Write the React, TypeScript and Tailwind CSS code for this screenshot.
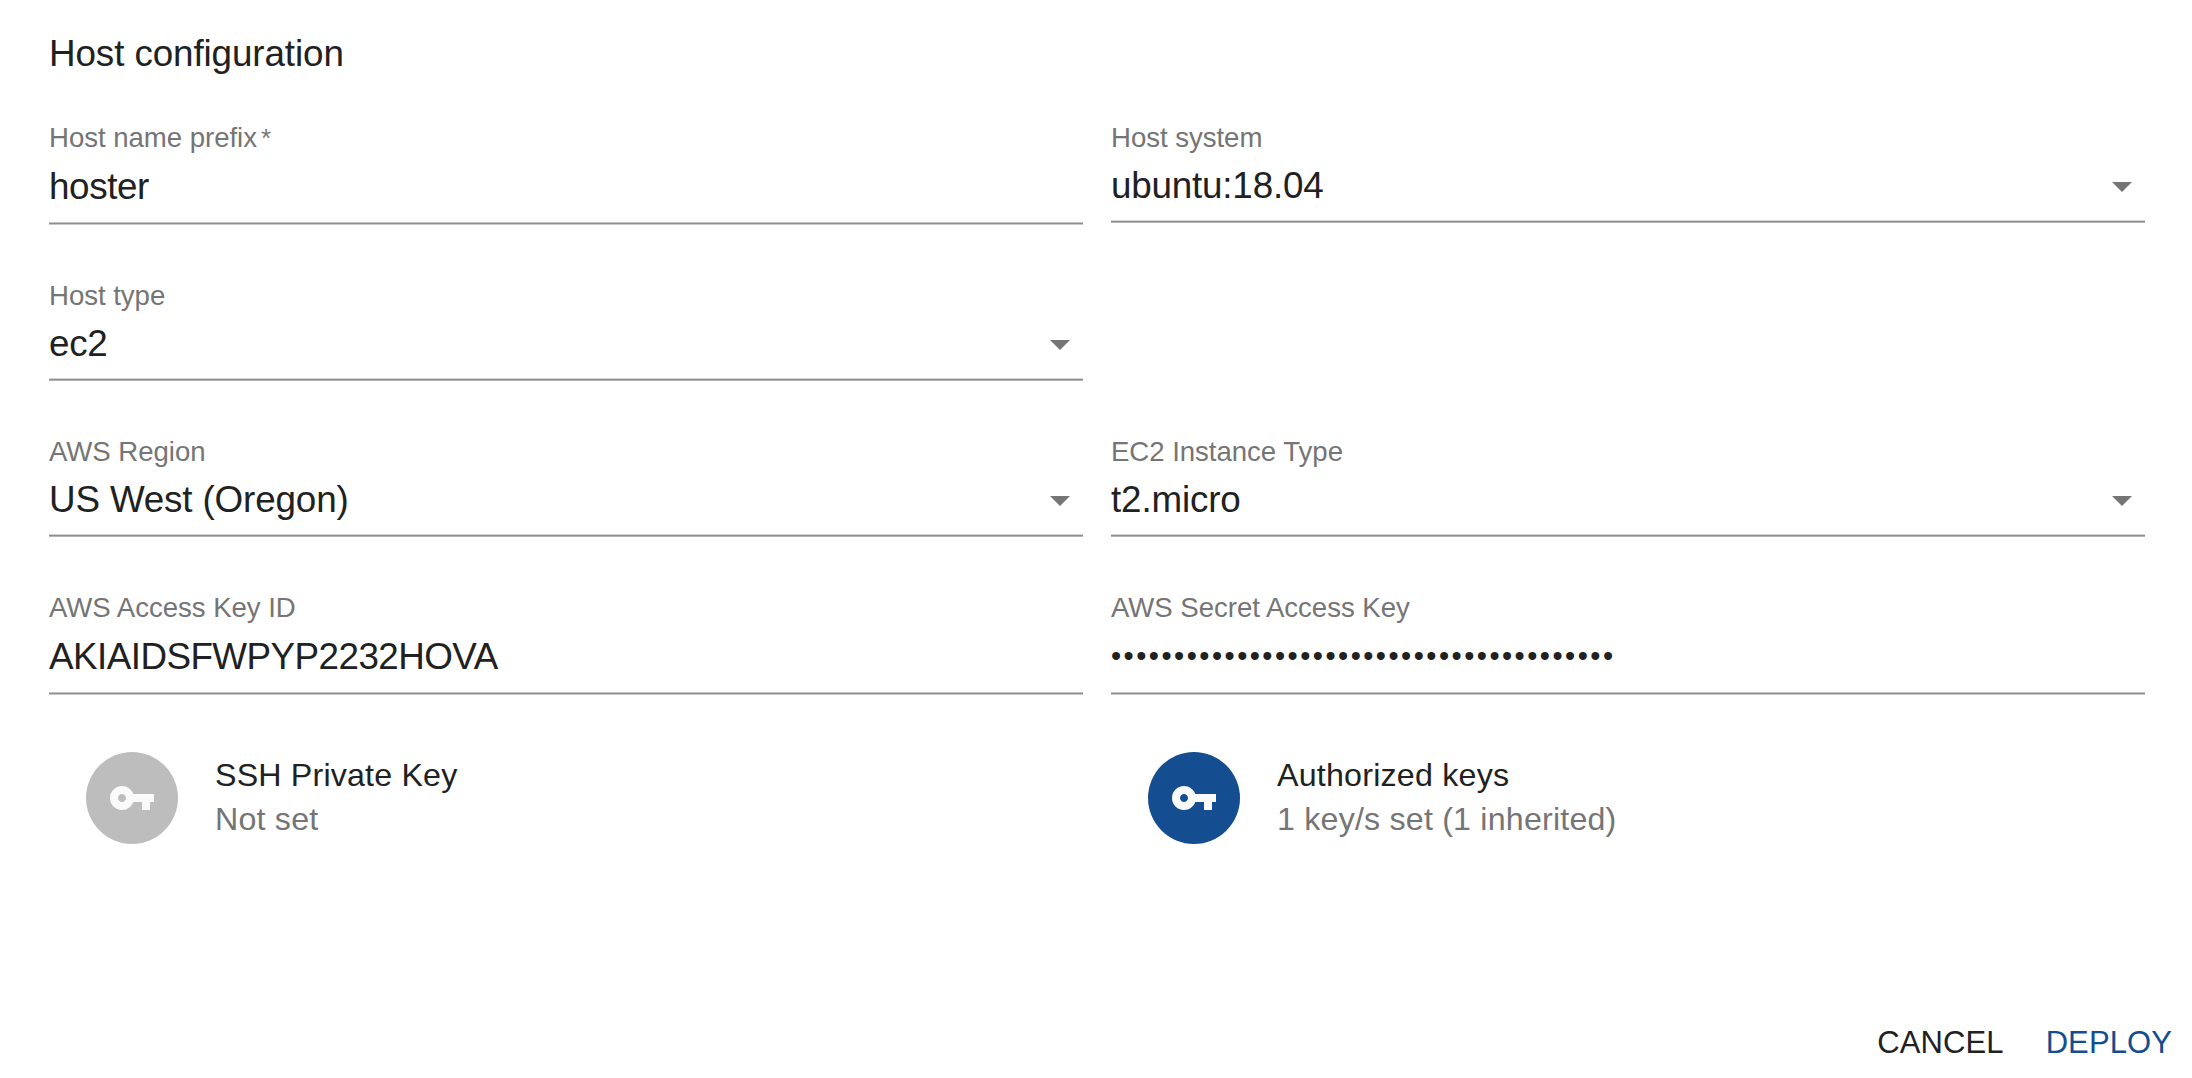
import { ReactNode } from 'react';

function Underline({ kind }: { kind: 'input' | 'select' }) {
  return kind === 'input' ? (
    <div className="flex flex-col">
      <div className="h-px bg-[#c4c4c4]" />
      <div className="h-px bg-[#8e8e8e]" />
      <div className="h-px bg-[#cacaca]" />
    </div>
  ) : (
    <div className="flex flex-col">
      <div className="h-px bg-[#d6d6d6]" />
      <div className="h-px bg-[#8e8e8e]" />
      <div className="h-px bg-[#b4b4b4]" />
    </div>
  );
}

type FieldProps = {
  label: ReactNode;
  value: string;
  valueClass: string;
  select?: boolean;
};

function Field({ label, value, valueClass, select }: FieldProps) {
  return (
    <div className="flex flex-col">
      <div className="flex h-8 items-center text-[27.6px] leading-8 whitespace-nowrap text-[#757575]">
        <span className="tracking-[-0.04px]">{label}</span>
      </div>
      <div className={select ? 'flex h-[66px] items-start justify-between pt-[11px]' : 'flex h-[68px] items-start pt-3'}>
        <span className={`whitespace-nowrap text-[#212121] ${valueClass}`}>{value}</span>
        {select && (
          <svg viewBox="0 0 20 10" className="mt-[17px] mr-[13px] h-[10px] w-5 fill-[#757575]">
            <path d="M0 0h20L10 10z" />
          </svg>
        )}
      </div>
      <Underline kind={select ? 'select' : 'input'} />
    </div>
  );
}

function KeyItem({ title, titleClass, detail, detailClass, circleClass }: {
  title: string; titleClass: string; detail: string; detailClass: string; circleClass: string;
}) {
  return (
    <div className="flex items-center pl-[37px]">
      <div className={`flex h-23 w-23 items-center justify-center rounded-full ${circleClass}`}>
        <svg viewBox="0 0 24 24" className="h-12 w-12 fill-[#fafafa]">
          <path d="M12.65 10C11.83 7.67 9.61 6 7 6c-3.31 0-6 2.69-6 6s2.69 6 6 6c2.61 0 4.83-1.67 5.65-4H17v4h4v-4h2v-4H12.65zM7 14c-1.1 0-2-.9-2-2s.9-2 2-2 2 .9 2 2-.9 2-2 2z" />
        </svg>
      </div>
      <div className="mb-[2px] ml-[37px] flex flex-col text-[32.2px] leading-[44px] whitespace-nowrap">
        <span className={`text-[#212121] ${titleClass}`}>{title}</span>
        <span className={`text-[#757575] ${detailClass}`}>{detail}</span>
      </div>
    </div>
  );
}

export default function App() {
  return (
    <div className="flex h-[1078px] w-[2192px] flex-col overflow-hidden bg-white px-[49px] font-['Liberation_Sans',Arial,sans-serif]">
      <h1 className="mt-[33px] h-[42px] text-[36.8px] leading-[42px] whitespace-nowrap text-[#212121]">
        <span className="tracking-[-0.1px]">Host configuration</span>
      </h1>
      <div className="mt-[47px] grid grid-cols-[1034px_1034px] grid-rows-[158px_156px_156px_160px] gap-x-7">
        <Field
          label={<>Host name prefix<span className="ml-1 text-[26px]">*</span></>}
          value="hoster"
          valueClass="text-[36.8px] leading-[42px] tracking-[-0.4px]"
        />
        <Field select label="Host system" value="ubuntu:18.04" valueClass="text-[36.8px] leading-[42px] tracking-[-0.2px]" />
        <div className="col-span-2 w-[1034px]">
          <Field select label="Host type" value="ec2" valueClass="text-[36.8px] leading-[42px] tracking-[-0.3px]" />
        </div>
        <Field select label="AWS Region" value="US West (Oregon)" valueClass="text-[36.8px] leading-[42px] tracking-[-0.15px]" />
        <Field select label="EC2 Instance Type" value="t2.micro" valueClass="text-[36.8px] leading-[42px] tracking-[-0.15px]" />
        <Field label="AWS Access Key ID" value="AKIAIDSFWPYP2232HOVA" valueClass="text-[36.8px] leading-[42px] tracking-[-0.54px]" />
        <Field label="AWS Secret Access Key" value={'•'.repeat(40)} valueClass="text-[29px] leading-[40px] tracking-[2.46px]" />
        <KeyItem title="SSH Private Key" titleClass="tracking-[0.18px]" detail="Not set" detailClass="tracking-[0.2px]" circleClass="bg-[#bdbdbd]" />
        <KeyItem title="Authorized keys" titleClass="tracking-[0.22px]" detail="1 key/s set (1 inherited)" detailClass="tracking-[0.2px]" circleClass="bg-[#154e90]" />
      </div>
      <div className="mt-[181px] -mr-[29px] flex justify-end gap-[42px] text-[31px] leading-9 whitespace-nowrap">
        <button className="tracking-[0.1px] text-[#212121]">CANCEL</button>
        <button className="tracking-[0.1px] text-[#154e90]">DEPLOY</button>
      </div>
    </div>
  );
}
